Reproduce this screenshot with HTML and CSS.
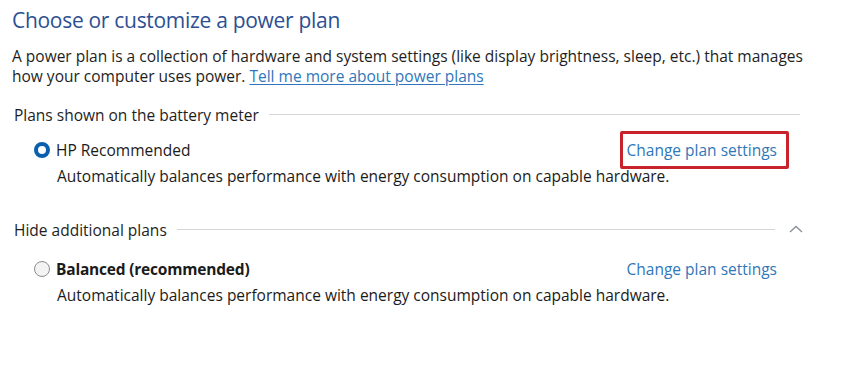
FILE: index.html
```html
<!DOCTYPE html>
<html>
<head>
<meta charset="utf-8">
<link rel="stylesheet" href="styles.css">
</head>
<body>
<div class="page">
  <h1 class="title">Choose or customize a power plan</h1>
  <p class="intro">A power plan is a collection of hardware and system settings (like display brightness, sleep, etc.) that manages how your computer uses power. <a class="link under" href="#">Tell me more about power plans</a></p>

  <div class="group first">
    <div class="group-head">
      <span class="group-label">Plans shown on the battery meter</span>
      <span class="rule"></span>
    </div>
    <div class="plan">
      <div class="plan-row">
        <span class="radio on"></span>
        <span class="plan-name">HP Recommended</span>
        <span class="action boxed"><a class="link" href="#">Change plan settings</a></span>
      </div>
      <div class="plan-desc">Automatically balances performance with energy consumption on capable hardware.</div>
    </div>
  </div>

  <div class="group second">
    <div class="group-head">
      <span class="group-label">Hide additional plans</span>
      <span class="rule short"></span>
      <svg class="chev" width="14" height="8" viewBox="0 0 14 8"><path d="M1 7 L7 1.5 L13 7" fill="none" stroke="#8a8f96" stroke-width="1.3"/></svg>
    </div>
    <div class="plan">
      <div class="plan-row">
        <span class="radio"></span>
        <span class="plan-name bold">Balanced (recommended)</span>
        <span class="action"><a class="link" href="#">Change plan settings</a></span>
      </div>
      <div class="plan-desc">Automatically balances performance with energy consumption on capable hardware.</div>
    </div>
  </div>
</div>
</body>
</html>
```
FILE: styles.css
```css
html, body {
  margin: 0;
  padding: 0;
  background: #ffffff;
}
body {
  font-family: "Open Sans", "Noto Sans", sans-serif;
  color: #1b1b1b;
  width: 850px;
  height: 371px;
  overflow: hidden;
}
.page {
  padding: 5px 0 0 12px;
  width: 800px;
}
.title {
  margin: 0;
  font-size: 21px;
  font-weight: 400;
  color: #2c5091;
  line-height: 30px;
  letter-spacing: -0.3px;
}
.intro {
  margin: 11px 0 0 0;
  font-size: 15.5px;
  line-height: 20px;
  color: #1e1e1e;
}
.link {
  color: #2f77ba;
  text-decoration: none;
}
.under {
  text-decoration: underline;
  text-underline-offset: 2px;
}
.group.first { margin-top: 19px; }
.group.second { margin-top: 34px; }
.group-head {
  display: flex;
  align-items: center;
  height: 20px;
  padding-left: 2px;
}
.group-label {
  font-size: 15.5px;
  color: #1e1e1e;
  white-space: nowrap;
}
.rule {
  flex: 1;
  height: 1px;
  background: #d6d6d6;
  margin-left: 10px;
  margin-right: 12px;
  margin-top: -2px;
}
.rule.short {
  margin-right: 14px;
}
.chev {
  margin-right: 9px;
  margin-top: -2px;
  flex: none;
}
.plan {
  padding-left: 22px;
}
.plan-row {
  display: flex;
  align-items: center;
  height: 36px;
  margin-top: 7px;
}
.second .plan-row {
  margin-top: 11px;
}
.radio {
  width: 16px;
  height: 16px;
  border-radius: 50%;
  border: 1px solid #8c8c8c;
  background: #f3f3f3;
  box-sizing: border-box;
  flex: none;
}
.radio.on {
  border: 4px solid #0a5fae;
  background: #ffffff;
}
.plan-name {
  margin-left: 6px;
  font-size: 15.5px;
  flex: 1;
}
.plan-name.bold {
  font-weight: 700;
  letter-spacing: -0.2px;
}
.action {
  font-size: 15.5px;
  padding: 5px 9px 5px 4px;
  margin-right: 23px;
  border: 3px solid transparent;
  border-radius: 2px;
}
.action.boxed {
  border-color: #c8232c;
}
.plan-desc {
  padding-left: 23px;
  font-size: 15.5px;
  line-height: 20px;
  margin-top: -2px;
}
```
